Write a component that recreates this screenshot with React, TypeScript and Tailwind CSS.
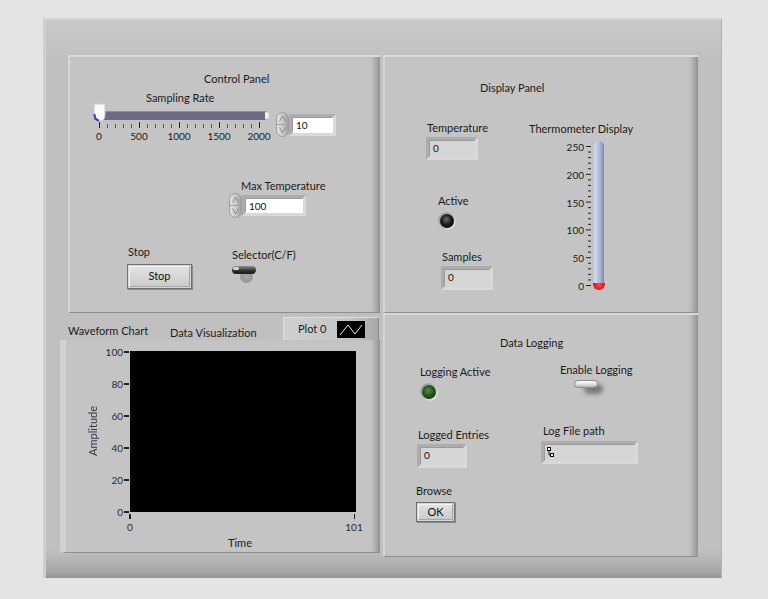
import React from 'react';

// LabVIEW style front panel. Panels flow in two columns; each control (label + widget)
// is a node dropped on its panel canvas, so those nodes keep their canvas spot.

const txt = 'whitespace-nowrap text-[11px] leading-[14px] text-[#1b1b1b]';

function At({ x, y, children, className = '' }: { x: number; y: number; children: React.ReactNode; className?: string }) {
  return (
    <div className={`absolute ${className}`} style={{ left: x, top: y }}>
      {children}
    </div>
  );
}

function Box({ w, h, value, white = false }: { w: number; h: number; value: string; white?: boolean }) {
  return (
    <div
      className="border-[3px] border-t-[#adadad] border-l-[#adadad] border-b-[#d9d9d9] border-r-[#d9d9d9]"
      style={{ width: w, height: h }}
    >
      <div
        className={`h-full w-full border border-t-[#9a9a9a] border-l-[#9a9a9a] border-b-transparent border-r-transparent pl-[3px] text-[10px] leading-[15px] text-[#111] ${white ? 'bg-white' : 'bg-[#d5d5d5]'}`}
      >
        {value}
      </div>
    </div>
  );
}

function Spin() {
  return (
    <svg width="13" height="25" viewBox="0 0 13 25" className="shrink-0">
      <defs>
        <linearGradient id="spg" x1="0" x2="1">
          <stop offset="0" stopColor="#e6e6e6" />
          <stop offset="0.6" stopColor="#c4c4c4" />
          <stop offset="1" stopColor="#9a9a9a" />
        </linearGradient>
      </defs>
      <rect x="0.5" y="0.5" width="12" height="24" rx="6" fill="url(#spg)" stroke="#9c9c9c" />
      <line x1="1" y1="12.5" x2="12" y2="12.5" stroke="#a0a0a0" />
      <path d="M3.5 9.5 L6.5 4 L9.5 9.5" fill="none" stroke="#8a8a8a" />
      <path d="M3.5 15.5 L6.5 21 L9.5 15.5" fill="none" stroke="#8a8a8a" />
    </svg>
  );
}

function Led({ color }: { color: 'black' | 'green' }) {
  const inner =
    color === 'black'
      ? 'bg-[radial-gradient(circle_at_45%_40%,#6a6a6a_0%,#1b1b1b_45%,#000_100%)]'
      : 'bg-[radial-gradient(circle_at_45%_40%,#5b8a4a_0%,#234d1c_50%,#102a0c_100%)]';
  return (
    <div className="h-[18px] w-[18px] rounded-full bg-[linear-gradient(135deg,#8a8a8a,#f2f2f2)] p-[2px]">
      <div className={`h-full w-full rounded-full ${inner}`} />
    </div>
  );
}

function Button({ w, h, text }: { w: number; h: number; text: string }) {
  return (
    <div className="border border-[#6f6f6f] bg-[#d6d6d6] p-[1px] shadow-[1px_1px_0_#8a8a8a]" style={{ width: w, height: h }}>
      <div className="flex h-full w-full items-center justify-center border border-t-[#f4f4f4] border-l-[#f4f4f4] border-b-[#a8a8a8] border-r-[#a8a8a8] bg-[linear-gradient(#e2e2e2,#cbcbcb)] text-[11px] text-[#111]">
        {text}
      </div>
    </div>
  );
}

function Panel({ className = '', children }: { className?: string; children: React.ReactNode }) {
  return (
    <div
      className={`relative shrink-0 border-t-2 border-l-2 border-b border-t-[#d9d9d9] border-l-[#d6d6d6] border-b-[#8e8e8e] bg-[#c4c4c4] shadow-[inset_-9px_0_6px_-5px_rgba(0,0,0,0.28)] ${className}`}
    >
      <div className="relative -ml-[2px] -mt-[2px] h-full w-full">{children}</div>
    </div>
  );
}

function Slider() {
  const ticks = Array.from({ length: 21 }, (_, i) => i);
  return (
    <div className="flex w-[180px] flex-col">
      <div className="relative h-[19px]">
        <div className="absolute left-[1px] top-[8px] h-[9px] w-[173px] rounded-r-[3px] bg-[#6b6b86] shadow-[inset_0_1px_0_#8c8ca4]" />
        <div className="absolute left-[172px] top-[9px] h-[7px] w-[4px] rounded-r-full bg-[#ededed]" />
        <svg className="absolute left-0 top-0" width="13" height="19" viewBox="0 0 13 19">
          <path d="M1 1 H12 V12 Q12 18 6.5 18 Q1 18 1 12 Z" fill="#fafafa" stroke="#c9c9c9" />
          <path d="M1.5 11 Q1.5 17 6 17.5" fill="none" stroke="#2b3fc4" strokeWidth="2" />
        </svg>
      </div>
      <svg className="ml-[5px]" width="166" height="7" viewBox="0 0 166 7">
        {ticks.map((i) => (
          <line key={i} x1={1.5 + i * 8} x2={1.5 + i * 8} y1={i % 5 === 0 ? 0 : 2} y2={6} stroke={i % 5 === 0 ? '#222' : '#555'} strokeWidth="1" />
        ))}
      </svg>
      <div className="ml-[-14px] mt-[1px] flex w-[200px] justify-between">
        {['0', '500', '1000', '1500', '2000'].map((t) => (
          <span key={t} className="w-[40px] text-center text-[10px] leading-[13px] text-[#1b1b1b]">
            {t}
          </span>
        ))}
      </div>
    </div>
  );
}

function Thermometer() {
  const labels = [250, 200, 150, 100, 50, 0];
  const minor = Array.from({ length: 26 }, (_, i) => i);
  return (
    <div className="flex items-start">
      <div className="flex h-[151px] w-[30px] flex-col justify-between">
        {labels.map((v) => (
          <span key={v} className="text-right text-[10px] leading-[12px] text-[#1b1b1b]">
            {v}
          </span>
        ))}
      </div>
      <svg className="ml-[2px] mt-[4px]" width="6" height="143" viewBox="0 0 6 143">
        {minor.map((i) => {
          const yy = 1.5 + i * 5.56;
          return <line key={i} x1={i % 5 === 0 ? 0 : 2} x2={5} y1={yy} y2={yy} stroke="#222" strokeWidth="1" />;
        })}
      </svg>
      <div className="ml-[1px] flex flex-col items-center">
        <div className="h-[147px] w-[10px] rounded-t-full bg-[linear-gradient(90deg,#d6dcef_0%,#bcc5e3_40%,#98a1c2_80%,#7b83a3_100%)]" />
        <div className="-mt-[5px] h-[7px] w-[12px] rounded-b-full bg-[radial-gradient(circle_at_50%_30%,#ff4a4a,#c80000)]" />
      </div>
    </div>
  );
}

function Chart() {
  const ys = [100, 80, 60, 40, 20, 0];
  return (
    <div className="h-[213px] w-[320px] shrink-0 border-l-[6px] border-b border-l-[#d2d2d2] border-b-[#8e8e8e] bg-[#c4c4c4] shadow-[inset_-9px_0_6px_-5px_rgba(0,0,0,0.28)]">
      <div className="-ml-[6px] flex flex-col pt-[6px]">
        <div className="flex items-start">
          <div className="ml-[26px] mt-[60px] text-[11px] leading-[14px] text-[#34344e] [writing-mode:vertical-rl] rotate-180">Amplitude</div>
          <div className="ml-[-9px] flex h-[172px] w-[38px] flex-col justify-between">
            {ys.map((v) => (
              <div key={v} className="flex items-center justify-end">
                <span className="text-[10px] leading-[12px] text-[#2b2b2b]">{v}</span>
                <span className="ml-[1px] h-[2px] w-[5px] bg-[#222]" />
              </div>
            ))}
          </div>
          <div className="ml-[1px] mt-[5px] h-[161px] w-[226px] bg-black" />
        </div>
        <div className="ml-[69px] -mt-[4px] flex w-[226px] justify-between">
          <span className="h-[5px] w-[2px] bg-[#222]" />
          <span className="h-[5px] w-[1px] bg-[#222]" />
        </div>
        <div className="ml-[55px] mt-[2px] flex w-[254px] justify-between text-[10px] leading-[12px] text-[#2b2b2b]">
          <span className="w-[30px] text-center">0</span>
          <span className="w-[30px] text-center">101</span>
        </div>
        <div className={`ml-[160px] mt-[3px] w-[40px] text-center ${txt}`}>Time</div>
      </div>
    </div>
  );
}

function Legend() {
  return (
    <div className="mr-[2px] flex h-[23px] w-[95px] items-center border-t border-l border-t-[#e0e0e0] border-l-[#e0e0e0] bg-[linear-gradient(90deg,#d0d0d0,#c4c4c4_70%,#a8a8a8)] shadow-[1px_1px_0_#8a8a8a]">
      <span className={`ml-[14px] ${txt}`}>Plot 0</span>
      <svg className="ml-auto mr-[13px]" width="28" height="17" viewBox="0 0 28 17">
        <rect width="28" height="17" fill="#000" />
        <polyline points="3,14 11,4 18,13 25,4" fill="none" stroke="#f2f2f2" strokeWidth="1" />
      </svg>
    </div>
  );
}

function ToggleSelector() {
  return (
    <div className="relative h-[20px] w-[26px]">
      <div className="absolute left-[8px] top-[6px] h-[13px] w-[13px] rounded-full bg-[radial-gradient(circle,#a9a9a9,#8c8c8c)]" />
      <div className="absolute left-0 top-[2px] h-[8px] w-[24px] rounded-full bg-[linear-gradient(#8f8f8f,#2e2e2e_60%,#1a1a1a)]" />
      <div className="absolute left-[1px] top-[3px] h-[3px] w-[6px] rounded-full bg-[#d5d5d5]" />
    </div>
  );
}

function ToggleLogging() {
  return (
    <div className="relative h-[18px] w-[32px]">
      <div className="absolute left-[10px] top-[6px] h-[10px] w-[19px] rounded-full bg-[#7a7a7a] blur-[2px]" />
      <div className="absolute left-0 top-[2px] h-[8px] w-[24px] rounded-full border border-[#8d8d8d] bg-[linear-gradient(#ffffff,#dcdcdc_60%,#b3b3b3)]" />
    </div>
  );
}

function PathBox() {
  return (
    <div className="h-[23px] w-[97px] border-[3px] border-t-[#adadad] border-l-[#adadad] border-b-[#d9d9d9] border-r-[#d9d9d9]">
      <div className="h-full w-full border border-t-[#9a9a9a] border-l-[#9a9a9a] border-b-transparent border-r-transparent bg-[#d5d5d5] pl-[2px] pt-[2px]">
        <svg width="7" height="11" viewBox="0 0 7 11">
          <rect x="0.5" y="0.5" width="3" height="3" fill="#fff" stroke="#111" />
          <rect x="3.5" y="6.5" width="3" height="3" fill="#fff" stroke="#111" />
          <path d="M2 4 V8 H3.5" fill="none" stroke="#111" />
        </svg>
      </div>
    </div>
  );
}

export default function App() {
  return (
    <div className="h-[599px] w-[768px] overflow-hidden bg-[#e4e4e4] pt-[18px] pl-[43px] font-['Lato',sans-serif]">
      <div className="flex h-[560px] w-[679px] gap-[3px] border-t-2 border-l-[3px] border-r border-t-[#d4d4d4] border-l-[#cfcfcf] border-r-[#b0b0b0] bg-[linear-gradient(#c9c9c9_0px,#c0c0c0_40px,#c0c0c0_530px,#a6a6a6_552px,#8e8e8e_560px)] pl-[14px] pt-[35px]">
        {/* left column */}
        <div className="flex w-[320px] flex-col">
          <Panel className="ml-[8px] h-[258px] w-[312px]">
            <At x={136} y={17} className={txt}>Control Panel</At>
            <At x={25} y={36} className="flex flex-col">
              <span className={`ml-[53px] ${txt}`}>Sampling Rate</span>
              <div className="-mt-[2px] flex items-start">
                <Slider />
                <div className="ml-[3px] mt-[9px] flex items-center">
                  <Spin />
                  <Box w={47} h={22} value="10" white />
                </div>
              </div>
            </At>
            <At x={161} y={124} className="flex flex-col">
              <span className={`ml-[12px] ${txt}`}>Max Temperature</span>
              <div className="flex items-center">
                <Spin />
                <Box w={64} h={21} value="100" white />
              </div>
            </At>
            <At x={59} y={190} className="flex flex-col gap-[5px]">
              <span className={`ml-[1px] ${txt}`}>Stop</span>
              <Button w={65} h={25} text="Stop" />
            </At>
            <At x={164} y={193} className="flex flex-col gap-[2px]">
              <span className={txt}>Selector(C/F)</span>
              <ToggleSelector />
            </At>
          </Panel>

          <div className="flex h-[27px] items-end">
            <span className={`ml-[8px] mb-[2px] w-[102px] ${txt}`}>Waveform Chart</span>
            <span className={txt}>Data Visualization</span>
            <div className="ml-auto">
              <Legend />
            </div>
          </div>
          <Chart />
        </div>

        {/* right column */}
        <div className="flex w-[315px] flex-col">
          <Panel className="h-[258px] w-[315px]">
            <At x={97} y={26} className={txt}>Display Panel</At>
            <At x={43} y={66} className="flex flex-col gap-[2px]">
              <span className={`ml-[1px] ${txt}`}>Temperature</span>
              <Box w={52} h={23} value="0" />
            </At>
            <At x={146} y={67} className="flex flex-col">
              <span className={txt}>Thermometer Display</span>
              <div className="ml-[25px] mt-[5px]">
                <Thermometer />
              </div>
            </At>
            <At x={55} y={139} className="flex flex-col gap-[4px]">
              <span className={txt}>Active</span>
              <Led color="black" />
            </At>
            <At x={58} y={195} className="flex flex-col gap-[2px]">
              <span className={`ml-[1px] ${txt}`}>Samples</span>
              <Box w={52} h={24} value="0" />
            </At>
          </Panel>

          <Panel className="h-[244px] w-[315px]">
            <At x={117} y={23} className={txt}>Data Logging</At>
            <At x={37} y={52} className="flex flex-col gap-[4px]">
              <span className={txt}>Logging Active</span>
              <Led color="green" />
            </At>
            <At x={177} y={50} className="flex flex-col gap-[1px]">
              <span className={txt}>Enable Logging</span>
              <div className="ml-[14px]">
                <ToggleLogging />
              </div>
            </At>
            <At x={34} y={115} className="flex flex-col gap-[2px]">
              <span className={`ml-[1px] ${txt}`}>Logged Entries</span>
              <Box w={50} h={24} value="0" />
            </At>
            <At x={158} y={111} className="flex flex-col gap-[3px]">
              <span className={`ml-[2px] ${txt}`}>Log File path</span>
              <PathBox />
            </At>
            <At x={33} y={171} className="flex flex-col gap-[4px]">
              <span className={txt}>Browse</span>
              <Button w={39} h={20} text="OK" />
            </At>
          </Panel>
        </div>
      </div>
    </div>
  );
}
